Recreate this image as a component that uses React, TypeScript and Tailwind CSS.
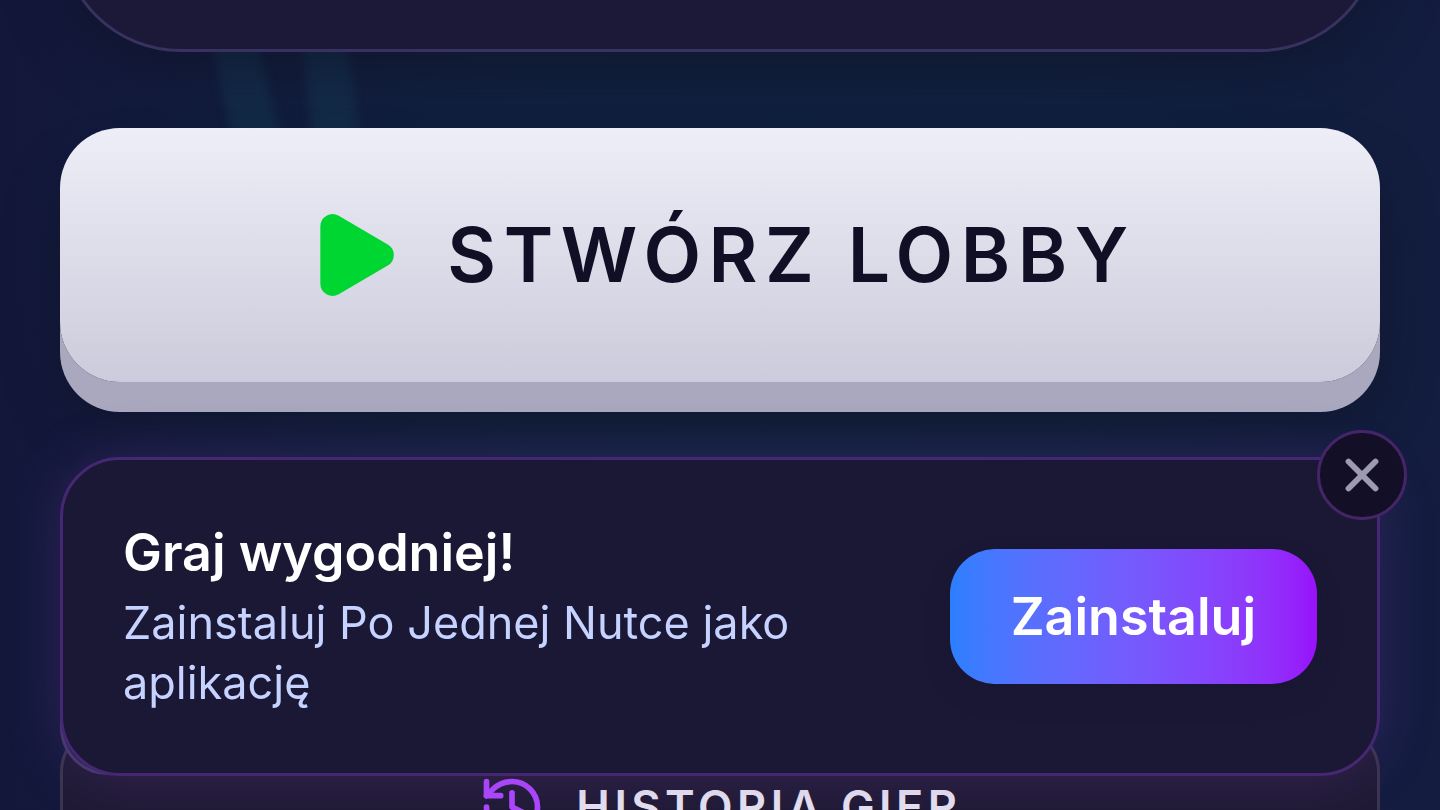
import React, { useState } from "react";
import { History, Play, X } from "lucide-react";

function NoteBackdrop() {
  return (
    <svg
      aria-hidden="true"
      className="pointer-events-none absolute top-0 left-[180px] h-[260px] w-[240px] blur-[5px]"
      viewBox="0 0 240 260"
      fill="none"
      stroke="#14304d"
      strokeOpacity="0.7"
      strokeWidth="46"
    >
      <path d="M48 0 Q58 70 78 140 T110 260" />
      <path d="M136 0 Q150 70 156 140 T180 260" />
    </svg>
  );
}

function InstallToast({ onClose }: { onClose: () => void }) {
  return (
    <aside className="fixed inset-x-[60px] bottom-[34px] z-20 flex items-center justify-between gap-[45px] rounded-[60px] border-3 border-[#452773] bg-[#1b1835] p-[60px] shadow-[0_0_56px_rgba(130,70,180,0.24)]">
      <div className="min-w-0 flex-1">
        <h2 className="text-[52px] leading-[66px] font-semibold text-white">Graj wygodniej!</h2>
        <p className="mt-[7px] max-w-[760px] text-[45px] leading-[60px] text-[#c6d2ff]">
          Zainstaluj Po Jednej Nutce jako aplikację
        </p>
      </div>
      <button
        type="button"
        className="shrink-0 rounded-[45px] bg-linear-to-r from-[#2b7fff] to-[#9810fa] px-[61px] py-[30px] text-[52px] leading-[75px] font-semibold text-white shadow-[0_12px_24px_rgba(20,20,45,0.3)]"
      >
        Zainstaluj
      </button>
      <button
        type="button"
        aria-label="Zamknij"
        onClick={onClose}
        className="absolute -top-[30px] -right-[30px] flex size-[90px] items-center justify-center rounded-full border-3 border-[#452468] bg-[#120f26] text-[#9c9bb0]"
      >
        <X size={54} strokeWidth={2.6} />
      </button>
    </aside>
  );
}

export default function App() {
  const [toastOpen, setToastOpen] = useState(true);

  return (
    <main className="relative h-screen overflow-hidden bg-[radial-gradient(ellipse_at_55%_30%,#10223f_0%,#11203e_35%,transparent_70%),linear-gradient(to_right,#13183b,#121a3e_50%,#141c40)] px-[60px] font-[Inter,sans-serif]">
      <NoteBackdrop />

      <section className="relative -mt-[240px] h-[292px] rounded-[120px] border-3 border-[#37325f] bg-[#1c1938] shadow-[0_15px_56px_rgba(15,18,35,0.6)]" />

      <button
        type="button"
        className="relative mt-[76px] flex w-full items-center justify-center gap-[45px] rounded-[60px] bg-linear-to-b from-[#eeeef8] to-[#cccbdb] py-[71px] text-[75px] leading-[112px] font-semibold tracking-widest text-[#110f26] shadow-[0_30px_0_#a9a8be,0_40px_50px_rgba(15,20,35,0.6)]"
      >
        <Play size={98} className="fill-[#00d631] text-[#00d631]" />
        STWÓRZ LOBBY
      </button>

      <div className="relative z-10 mt-[228px] h-[165px] w-1/2 rounded-[48px] border-3 border-[#403a68] bg-[#281f48]" />

      <button
        type="button"
        className="relative -mt-[51px] flex w-full items-center justify-center gap-[30px] rounded-[48px] border-3 border-[#3b3450] bg-[#1f1a35] py-[46px] text-[45px] leading-[68px] font-semibold tracking-widest text-[#e6e3f1]"
      >
        <History size={68} className="text-[#ad46ff]" />
        HISTORIA GIER
      </button>

      {toastOpen && <InstallToast onClose={() => setToastOpen(false)} />}
    </main>
  );
}
